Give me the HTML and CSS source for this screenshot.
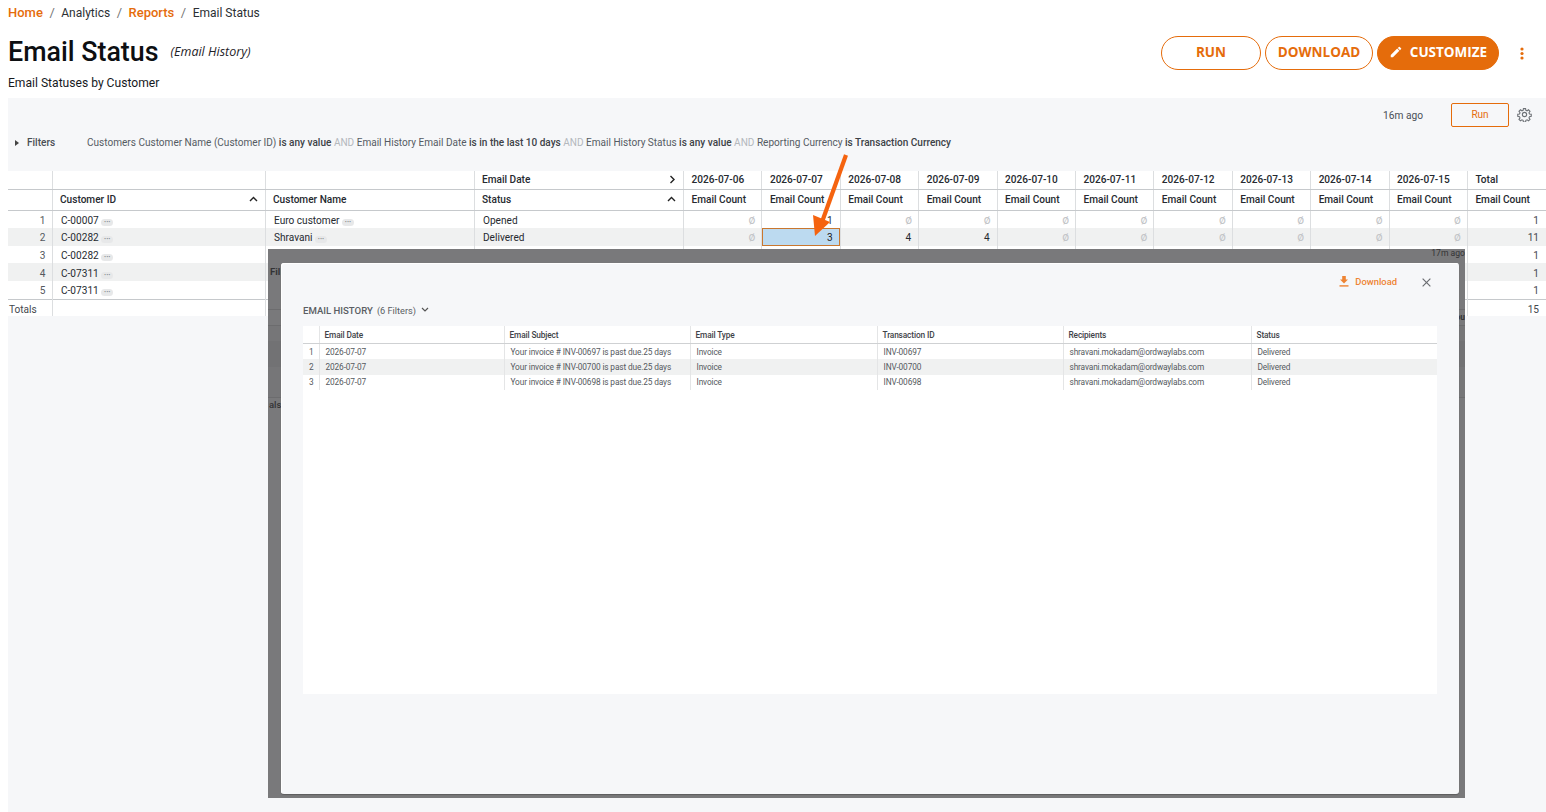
FILE: index.html
```html
<!DOCTYPE html>
<html lang="en">
  <head>
    <meta charset="UTF-8" />
    <meta name="viewport" content="width=device-width, initial-scale=1.0" />
    <title>Email Status</title>
    <link rel="stylesheet" href="styles.css">
  </head>
  <body>
    <div class="page">
      <nav class="crumbs">
        <a>Home</a><span class="sep">/</span>
        <span>Analytics</span><span class="sep">/</span>
        <a>Reports</a><span class="sep">/</span>
        <span>Email Status</span>
      </nav>

      <header class="head">
        <div class="head-text">
          <div class="title-row">
            <h1>Email Status</h1>
            <em>(Email History)</em>
          </div>
          <p>Email Statuses by Customer</p>
        </div>
        <div class="head-actions">
          <button class="pill run">RUN</button>
          <button class="pill download">DOWNLOAD</button>
          <button class="pill customize">
            <svg width="14" height="14" viewBox="0 0 24 24"><path fill="#fff" d="M3 17.25V21h3.75L17.81 9.94l-3.75-3.75L3 17.25zM20.71 7.04a1 1 0 0 0 0-1.41l-2.34-2.34a1 1 0 0 0-1.41 0l-1.83 1.83 3.75 3.75 1.83-1.83z"/></svg>
            CUSTOMIZE
          </button>
          <svg class="kebab" width="4" height="13" viewBox="0 0 4 13"><circle cx="2" cy="2" r="1.6"/><circle cx="2" cy="6.5" r="1.6"/><circle cx="2" cy="11" r="1.6"/></svg>
        </div>
      </header>

      <section class="panel">
        <div class="panel-top">
          <span class="ago">16m ago</span>
          <button class="run-small">Run</button>
          <svg class="gear" width="15" height="15" viewBox="0 0 24 24" fill="none" stroke="#6f7378" stroke-width="1.8"><path d="M10.3 2.5h3.4l.5 2.8 1.9.8 2.3-1.6 2.4 2.4-1.6 2.3.8 1.9 2.8.5v3.4l-2.8.5-.8 1.9 1.6 2.3-2.4 2.4-2.3-1.6-1.9.8-.5 2.8h-3.4l-.5-2.8-1.9-.8-2.3 1.6-2.4-2.4 1.6-2.3-.8-1.9-2.8-.5v-3.4l2.8-.5.8-1.9-1.6-2.3 2.4-2.4 2.3 1.6 1.9-.8z"/><circle cx="12" cy="12" r="3.4"/></svg>
        </div>
        <div class="filters">
          <span class="caret"></span>
          <b>Filters</b>
          <span class="filter-text">Customers Customer Name (Customer ID) <i>is any value</i> <u>AND</u> Email History Email Date <i>is in the last 10 days</i> <u>AND</u> Email History Status <i>is any value</i> <u>AND</u> Reporting Currency <i>is Transaction Currency</i></span>
        </div>

        <table class="grid">
          <colgroup>
            <col class="c-num"><col class="c-id"><col class="c-name"><col class="c-status">
            <col class="c-day"><col class="c-day"><col class="c-day"><col class="c-day"><col class="c-day">
            <col class="c-day"><col class="c-day"><col class="c-day"><col class="c-day"><col class="c-day">
            <col class="c-total">
          </colgroup>
          <thead>
            <tr class="pivot">
              <th></th><th></th><th></th>
              <th><span class="split">Email Date <svg width="7" height="9" viewBox="0 0 7 9" fill="none" stroke="#222" stroke-width="1.4"><path d="M1.5 1l3.5 3.5L1.5 8"/></svg></span></th>
              <th>2026-07-06</th><th>2026-07-07</th><th>2026-07-08</th><th>2026-07-09</th><th>2026-07-10</th>
              <th>2026-07-11</th><th>2026-07-12</th><th>2026-07-13</th><th>2026-07-14</th><th>2026-07-15</th>
              <th>Total</th>
            </tr>
            <tr class="names">
              <th></th>
              <th><span class="split">Customer ID <svg width="9" height="6" viewBox="0 0 9 6" fill="none" stroke="#222" stroke-width="1.4"><path d="M1 5l3.5-3.5L8 5"/></svg></span></th>
              <th>Customer Name</th>
              <th><span class="split">Status <svg width="9" height="6" viewBox="0 0 9 6" fill="none" stroke="#222" stroke-width="1.4"><path d="M1 5l3.5-3.5L8 5"/></svg></span></th>
              <th>Email Count</th><th>Email Count</th><th>Email Count</th><th>Email Count</th><th>Email Count</th>
              <th>Email Count</th><th>Email Count</th><th>Email Count</th><th>Email Count</th><th>Email Count</th>
              <th>Email Count</th>
            </tr>
          </thead>
          <tbody>
            <tr>
              <td class="num">1</td><td>C-00007 <span class="dots">···</span></td><td>Euro customer <span class="dots">···</span></td><td>Opened</td>
              <td class="nil">ø</td><td class="val">1</td><td class="nil">ø</td><td class="nil">ø</td><td class="nil">ø</td>
              <td class="nil">ø</td><td class="nil">ø</td><td class="nil">ø</td><td class="nil">ø</td><td class="nil">ø</td>
              <td class="val tot">1</td>
            </tr>
            <tr>
              <td class="num">2</td><td>C-00282 <span class="dots">···</span></td><td>Shravani <span class="dots">···</span></td><td>Delivered</td>
              <td class="nil">ø</td><td class="val picked">3</td><td class="val">4</td><td class="val">4</td><td class="nil">ø</td>
              <td class="nil">ø</td><td class="nil">ø</td><td class="nil">ø</td><td class="nil">ø</td><td class="nil">ø</td>
              <td class="val tot">11</td>
            </tr>
            <tr>
              <td class="num">3</td><td>C-00282 <span class="dots">···</span></td><td></td><td></td>
              <td></td><td></td><td></td><td></td><td></td><td></td><td></td><td></td><td></td><td></td>
              <td class="val tot">1</td>
            </tr>
            <tr>
              <td class="num">4</td><td>C-07311 <span class="dots">···</span></td><td></td><td></td>
              <td></td><td></td><td></td><td></td><td></td><td></td><td></td><td></td><td></td><td></td>
              <td class="val tot">1</td>
            </tr>
            <tr>
              <td class="num">5</td><td>C-07311 <span class="dots">···</span></td><td></td><td></td>
              <td></td><td></td><td></td><td></td><td></td><td></td><td></td><td></td><td></td><td></td>
              <td class="val tot">1</td>
            </tr>
          </tbody>
          <tfoot>
            <tr>
              <td class="totals-label">Totals</td><td></td><td></td><td></td>
              <td></td><td></td><td></td><td></td><td></td><td></td><td></td><td></td><td></td><td></td>
              <td class="val tot">15</td>
            </tr>
          </tfoot>
        </table>
      </section>

      <svg class="arrow" width="50" height="90" viewBox="0 0 50 90">
        <path d="M44 1L20 68" stroke="#f5630f" stroke-width="4.2" fill="none"/>
        <path d="M11 61L28 68L13 82z" fill="#f5630f"/>
      </svg>

      <div class="overlay">
        <span class="ghost ghost-ago">17m ago</span>
        <span class="ghost ghost-fil">Fil</span>
        <span class="ghost ghost-als">als</span>
        <span class="ghost ghost-cu">ou</span>
        <div class="modal">
          <div class="modal-top">
            <a class="modal-download">
              <svg width="10" height="11" viewBox="0 0 10 11" fill="#ee8433"><path d="M3.2 0h3.6v3.4H9L5 7.4 1 3.4h2.2z"/><rect x="0.5" y="9.2" width="9" height="1.4"/></svg>
              Download
            </a>
            <svg class="close" width="9" height="9" viewBox="0 0 10 10" stroke="#6b6e72" stroke-width="1.3"><path d="M.7.7l8.6 8.6M9.3.7L.7 9.3"/></svg>
          </div>
          <div class="modal-title">
            <b>EMAIL HISTORY</b> <span>(6 Filters)</span>
            <svg width="8" height="6" viewBox="0 0 8 6" fill="none" stroke="#555" stroke-width="1.2"><path d="M1 1l3 3 3-3"/></svg>
          </div>
          <div class="history">
            <table class="hist">
              <colgroup>
                <col class="h-num"><col class="h-date"><col class="h-subject"><col class="h-type">
                <col class="h-txn"><col class="h-rcpt"><col class="h-status">
              </colgroup>
              <thead>
                <tr><th></th><th>Email Date</th><th>Email Subject</th><th>Email Type</th><th>Transaction ID</th><th>Recipients</th><th>Status</th></tr>
              </thead>
              <tbody>
                <tr><td class="num">1</td><td>2026-07-07</td><td>Your invoice # INV-00697 is past due.25 days</td><td>Invoice</td><td>INV-00697</td><td>shravani.mokadam@ordwaylabs.com</td><td>Delivered</td></tr>
                <tr><td class="num">2</td><td>2026-07-07</td><td>Your invoice # INV-00700 is past due.25 days</td><td>Invoice</td><td>INV-00700</td><td>shravani.mokadam@ordwaylabs.com</td><td>Delivered</td></tr>
                <tr><td class="num">3</td><td>2026-07-07</td><td>Your invoice # INV-00698 is past due.25 days</td><td>Invoice</td><td>INV-00698</td><td>shravani.mokadam@ordwaylabs.com</td><td>Delivered</td></tr>
              </tbody>
            </table>
          </div>
        </div>
      </div>
    </div>
  </body>
</html>
```

FILE: styles.css
```css
html,
body {
  margin: 0;
  height: 100%;
}

body {
  background: #fff;
  color: #1f2328;
  font-family: Roboto, sans-serif;
  overflow: hidden;
}

.page {
  position: relative;
  display: flex;
  flex-direction: column;
  height: 812px;
  padding-left: 8px;
  box-sizing: border-box;
}

.crumbs {
  display: flex;
  gap: 6.5px;
  height: 20px;
  padding-top: 5px;
  margin-bottom: 2px;
  align-items: baseline;
  font-size: 12px;
  color: #2b2f33;
}

.crumbs a {
  color: #e56c0b;
  font-size: 13px;
  font-weight: 500;
}

.crumbs .sep {
  color: #777;
  font-size: 13px;
}

.head {
  display: flex;
  justify-content: space-between;
  height: 71px;
}

.title-row {
  display: flex;
  align-items: center;
  gap: 12px;
  height: 49px;
}

h1 {
  margin: 0;
  font-size: 26.8px;
  font-weight: 500;
  color: #0d0f12;
}

.title-row em {
  font-family: "Open Sans", sans-serif;
  font-size: 12.5px;
}

.head-text p {
  margin: 0;
  font-size: 12.1px;
  color: #16191d;
}

.head-actions {
  display: flex;
  align-items: flex-start;
  gap: 4px;
  padding: 9px 22px 0 0;
}

.pill {
  height: 34px;
  border: 1px solid #e56c0b;
  border-radius: 17px;
  background: #fff;
  color: #e56c0b;
  font-family: "Open Sans", sans-serif;
  font-size: 13.5px;
  font-weight: 700;
  padding: 0 0 2px;
}

.run {
  width: 100px;
}

.download {
  width: 108px;
}

.customize {
  display: flex;
  align-items: center;
  justify-content: center;
  gap: 7px;
  width: 122px;
  background: #e56c0b;
  color: #fff;
}

.kebab {
  fill: #e56c0b;
  margin: 11px 0 0 17px;
}

.panel {
  flex: 1;
  background: #f6f7f9;
}

.panel-top {
  display: flex;
  justify-content: flex-end;
  align-items: center;
  height: 34px;
  padding-right: 14px;
}

.ago {
  font-size: 10.2px;
  color: #4a4f57;
  margin-right: 28px;
  padding-top: 1px;
}

.run-small {
  width: 58px;
  height: 24px;
  border: 1px solid #e56c0b;
  border-radius: 2px;
  background: transparent;
  color: #e56c0b;
  font-family: Roboto, sans-serif;
  font-size: 10px;
  padding: 0 0 1px;
  margin-right: 8px;
}

.gear {
  margin-top: -2px;
}

.filters {
  display: flex;
  align-items: center;
  height: 21px;
  font-size: 10.06px;
  padding-left: 7px;
}

.caret {
  width: 0;
  height: 0;
  border-left: 4px solid #444;
  border-top: 3.5px solid transparent;
  border-bottom: 3.5px solid transparent;
  margin-right: 8px;
}

.filters b {
  font-weight: 500;
  color: #4a4e54;
  width: 60px;
}

.filter-text {
  color: #555b63;
}

.filter-text i {
  font-style: normal;
  font-weight: 500;
  color: #3d4247;
}

.filter-text u {
  text-decoration: none;
  color: #b4b8bd;
}

.grid {
  table-layout: fixed;
  border-collapse: collapse;
  width: 1538px;
  margin-top: 18px;
  background: #fff;
  font-size: 10.1px;
  color: #262a30;
}

.c-num { width: 44px; }
.c-id { width: 213px; }
.c-name { width: 209px; }
.c-status { width: 209.5px; }
.c-day { width: 78.4px; }
.c-total { width: 78.5px; }

.grid th,
.grid td {
  border-left: 1px solid #dcdee0;
  padding: 0 7px 0 7.5px;
  white-space: nowrap;
  overflow: hidden;
}

.grid tr > :first-child {
  border-left: 0;
}

.grid th {
  text-align: left;
  font-weight: 500;
  padding-bottom: 2px;
}

.pivot th {
  height: 16px;
  border-bottom: 1px solid #c6c9cc;
}

.names th {
  height: 18px;
  border-bottom: 1px solid #c6c9cc;
}

.split {
  display: flex;
  align-items: center;
  justify-content: space-between;
}

.grid tbody td {
  height: 17.6px;
  box-sizing: border-box;
  padding-top: 2px;
  padding-left: 8.5px;
}

.grid tbody tr:last-child td {
  height: 18.5px;
}

.grid tbody tr:nth-child(even) {
  background: #f0f1f1;
}

.grid .num {
  text-align: right;
  padding-right: 6px;
  color: #55595e;
}

.dots {
  display: inline-block;
  width: 12px;
  height: 7px;
  border-radius: 4px;
  background: #e7e8e9;
  color: #7a7e83;
  font-size: 7px;
  font-weight: 700;
  line-height: 7px;
  text-align: center;
}

.grid .nil {
  text-align: right;
  color: #c3c5c8;
  font-size: 12px;
  line-height: 1;
  padding-top: 0;
  padding-right: 6px;
}

.val {
  text-align: right;
}

.tot {
  color: #44484e;
}

.grid td.picked {
  background: #bcdaf0;
  outline: 1px solid #c9772f;
  outline-offset: -1px;
  color: #222;
}

.grid tfoot td {
  height: 17px;
  box-sizing: border-box;
  padding-top: 3px;
  border-top: 1px solid #c6c9cc;
}

.grid .totals-label {
  padding-left: 1px;
  color: #44484e;
}

.arrow {
  position: absolute;
  left: 802px;
  top: 154px;
}

/* grey backdrop from the nested capture, old table rows still show through */
.overlay {
  position: absolute;
  left: 268px;
  top: 249px;
  width: 1197px;
  height: 549px;
  overflow: hidden;
  background: linear-gradient(#79797b 60px, #6c6c6e 60px, #6c6c6e 61px, #79797b 61px, #79797b 76px, #6c6c6e 76px, #6c6c6e 77px, #767678 77px, #767678 92px, #727274 92px, #727274 118px, #767678 118px, #767678 148px, #6c6c6e 148px, #6c6c6e 149px, #79797b 149px);
  box-sizing: border-box;
  padding: 14px 6px 4px 13px;
  display: flex;
}

.ghost {
  position: absolute;
  font-size: 9.5px;
  color: #333335;
  white-space: nowrap;
}

.ghost-ago {
  right: 0;
  top: -1px;
  font-size: 8.6px;
  line-height: 10px;
}

.ghost-fil {
  left: 2px;
  top: 17px;
  font-weight: 700;
}

.ghost-als {
  left: 1px;
  top: 150px;
  font-weight: 500;
}

.ghost-cu {
  right: 0;
  top: 63px;
  font-size: 8.5px;
  font-weight: 700;
}

.modal {
  position: relative;
  flex: 1;
  background: #f6f7f9;
  border-radius: 3px;
  box-shadow: inset 1px 1px 0 #fff, 0 1px 1px #5c5c5e;
  padding: 0 22px;
  display: flex;
  flex-direction: column;
}

.modal-top {
  display: flex;
  justify-content: flex-end;
  align-items: center;
  gap: 25px;
  height: 37px;
  padding: 0 6px 0 0;
}

.modal-download {
  display: flex;
  align-items: center;
  gap: 6px;
  color: #ee8433;
  font-size: 9.4px;
  font-weight: 500;
  padding-bottom: 1px;
}

.close {
  margin-top: 2px;
}

.modal-title {
  display: flex;
  align-items: center;
  gap: 4px;
  height: 20px;
  font-size: 9.6px;
  color: #5a5e63;
}

.modal-title b {
  font-weight: 500;
}

.modal-title span {
  font-size: 9.2px;
  margin-right: 1px;
}

.history {
  margin-top: 6px;
  height: 368px;
  background: #fff;
}

.hist {
  table-layout: fixed;
  border-collapse: collapse;
  width: 1134px;
  font-size: 8.3px;
  letter-spacing: -0.13px;
  color: #55595e;
}

.h-num { width: 16px; }
.h-date { width: 185px; }
.h-subject { width: 186px; }
.h-type { width: 187px; }
.h-txn { width: 186px; }
.h-rcpt { width: 188px; }
.h-status { width: 186px; }

.hist th,
.hist td {
  border-left: 1px solid #e4e5e6;
  padding: 0 6px;
  white-space: nowrap;
  text-align: left;
  overflow: hidden;
}

.hist tr > :first-child {
  border-left: 0;
}

.hist th {
  height: 17px;
  padding-left: 5px;
  font-weight: 500;
  color: #3f4348;
  border-bottom: 1px solid #cfd1d3;
}

.hist td {
  height: 15.5px;
  box-sizing: border-box;
}

.hist .num {
  padding: 0 0 0 6px;
}

.hist tbody tr:nth-child(even) {
  background: #f0f1f1;
}
```
